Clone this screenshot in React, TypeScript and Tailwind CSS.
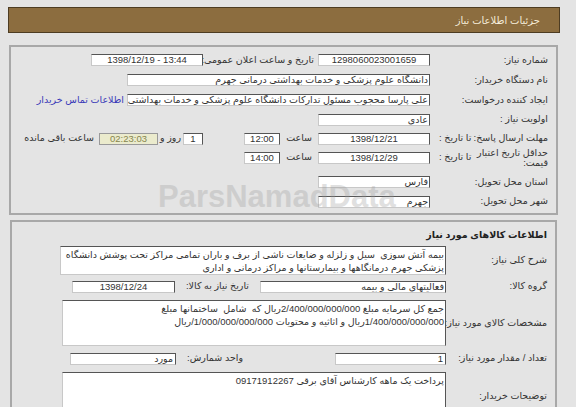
import React from 'react';

// Small field box, like an old read-only input
const Field: React.FC<{ className?: string; children?: React.ReactNode }> = ({ className = '', children }) => (
  <div
    className={`h-[12px] bg-white border border-[#555] border-b-[#c8c8c8] border-l-[#c8c8c8] flex items-center leading-none whitespace-nowrap overflow-hidden ${className}`}
  >
    {children}
  </div>
);

const Label: React.FC<{ className?: string; children?: React.ReactNode }> = ({ className = '', children }) => (
  <div className={`shrink-0 text-right whitespace-nowrap ${className}`}>{children}</div>
);

const Area: React.FC<{ className?: string; children?: React.ReactNode }> = ({ className = '', children }) => (
  <div
    className={`w-[384px] bg-white border border-[#555] border-b-[#c8c8c8] border-l-[#c8c8c8] pr-[1px] pt-[1px] leading-[13px] text-right ${className}`}
  >
    {children}
  </div>
);

export default function App() {
  return (
    <div
      dir="rtl"
      className="relative min-h-[407px] h-[407px] overflow-hidden bg-[#e4e4e4] text-[#333] text-[9.5px] font-['Liberation_Sans','DejaVu_Sans',sans-serif]"
    >
      {/* title bar */}
      <div className="pt-[7px] pr-[16px] pl-[8px]">
        <div className="h-[26px] bg-[#8c6d3f] border border-[#4d3c22] flex items-center pr-[19px] text-[#f4ecd9] text-[10px]">
          جزئیات اطلاعات نیاز
        </div>
      </div>

      {/* request details */}
      <div className="mt-[12px] mr-[18px] ml-[9px] border-2 border-[#a8a8a8] pt-[3px] pb-[2px] pr-[8px]">
        {/* row 1 */}
        <div className="flex items-center h-[20px]">
          <Label className="w-[118px]">شماره نیاز:</Label>
          <Field className="w-[112px] justify-center">
            <span dir="ltr">1298060023001659</span>
          </Field>
          <Label className="w-[115px] pr-[4px]">تاریخ و ساعت اعلان عمومی:</Label>
          <Field className="w-[112px] justify-center">
            <span dir="ltr">1398/12/19 - 13:44</span>
          </Field>
        </div>

        {/* row 2 */}
        <div className="flex items-center h-[20px]">
          <Label className="w-[118px]">نام دستگاه خریدار:</Label>
          <Field className="w-[303px] pr-[1px]">دانشگاه علوم پزشکی و خدمات بهداشتی درمانی جهرم</Field>
        </div>

        {/* row 3 */}
        <div className="flex items-center h-[20px]">
          <Label className="w-[118px]">ایجاد کننده درخواست:</Label>
          <Field className="w-[303px] pr-[1px]">
            علی پارسا محجوب مسئول تدارکات دانشگاه علوم پزشکی و خدمات بهداشتی درمانی جهرم
          </Field>
          <a className="pr-[3px] text-[#3a3ab8] whitespace-nowrap">اطلاعات تماس خریدار</a>
        </div>

        {/* row 4 */}
        <div className="flex items-center h-[19px]">
          <Label className="w-[118px]">اولویت نیاز :</Label>
          <Field className="w-[112px] pr-[1px]">عادی</Field>
        </div>

        {/* row 5 */}
        <div className="flex items-center h-[19px]">
          <div className="w-[118px] shrink-0 flex justify-between pl-[9px] whitespace-nowrap">
            <span>مهلت ارسال پاسخ:</span>
            <span>تا تاریخ :</span>
          </div>
          <Field className="w-[112px] justify-center">
            <span dir="ltr">1398/12/21</span>
          </Field>
          <Label className="w-[38px] pr-[6px]">ساعت</Label>
          <Field className="w-[36px] justify-center">
            <span dir="ltr">12:00</span>
          </Field>
          <div className="w-[41px] shrink-0" />
          <Field className="w-[20px] justify-center">1</Field>
          <Label className="w-[25px] pr-[2px]">روز و</Label>
          <div className="w-[59px] h-[12px] shrink-0 bg-[#ebebcd] border border-[#999] flex items-center justify-center text-[#86864e] leading-none">
            <span dir="ltr">02:23:03</span>
          </div>
          <Label className="pr-[5px]">ساعت باقی مانده</Label>
        </div>

        {/* row 6 */}
        <div className="flex items-center h-[19px]">
          <div className="w-[118px] shrink-0 flex items-center justify-between pl-[9px] whitespace-nowrap">
            <span className="leading-[10px] text-right">
              حداقل تاریخ اعتبار
              <br />
              قیمت:
            </span>
            <span>تا تاریخ :</span>
          </div>
          <Field className="w-[112px] justify-center">
            <span dir="ltr">1398/12/29</span>
          </Field>
          <Label className="w-[38px] pr-[6px]">ساعت</Label>
          <Field className="w-[36px] justify-center">
            <span dir="ltr">14:00</span>
          </Field>
        </div>

        {/* row 7 */}
        <div className="flex items-center h-[20px] mt-[5px]">
          <Label className="w-[118px]">استان محل تحویل:</Label>
          <Field className="w-[112px] pr-[1px]">فارس</Field>
        </div>

        {/* row 8 */}
        <div className="flex items-center h-[19px]">
          <Label className="w-[118px]">شهر محل تحویل:</Label>
          <Field className="w-[112px] pr-[1px]">جهرم</Field>
        </div>
      </div>

      {/* goods */}
      <div className="mt-[5px] mr-[19px] ml-[10px] border-2 border-[#a8a8a8] pt-[5px] pr-[8px] h-[200px]">
        <div className="h-[17px] flex items-center font-bold text-[#222]">اطلاعات کالاهای مورد نیاز</div>

        <div className="flex items-center mt-[2px]">
          <Label className="w-[101px]">شرح کلی نیاز:</Label>
          <Area className="h-[29px] w-[386px]">
            بیمه آتش سوزی&nbsp; سیل و زلزله و ضایعات ناشی از برف و باران تمامی مراکز تحت پوشش دانشگاه
            <br />
            پزشکی جهرم درمانگاهها و بیمارستانها و مراکز درمانی و اداری
          </Area>
        </div>

        <div className="flex items-center h-[21px] mt-[1px]">
          <Label className="w-[101px]">گروه کالا:</Label>
          <Field className="w-[186px] pr-[1px]">فعالیتهای مالی و بیمه</Field>
          <Label className="w-[85px] pr-[11px]">تاریخ نیاز به کالا:</Label>
          <Field className="w-[103px] justify-center">
            <span dir="ltr">1398/12/24</span>
          </Field>
        </div>

        <div className="flex items-center mt-[3px]">
          <Label className="w-[101px]">مشخصات کالای مورد نیاز:</Label>
          <Area className="h-[46px]">
            جمع کل سرمایه مبلغ 2/400/000/000/000ریال که&nbsp; شامل&nbsp; ساختمانها مبلغ
            <br />
            1/400/000/000/000ریال و اثاثیه و محتویات 1/000/000/000/000/ریال
          </Area>
        </div>

        <div className="flex items-center h-[21px] mt-[2px]">
          <Label className="w-[101px]">تعداد / مقدار مورد نیاز:</Label>
          <Field className="w-[111px] pr-[2px]">1</Field>
          <Label className="w-[159px] pr-[92px]">واحد شمارش:</Label>
          <Field className="w-[106px] pr-[2px]">مورد</Field>
        </div>

        <div className="flex items-center mt-[3px]">
          <Label className="w-[101px]">توضیحات خریدار:</Label>
          <Area className="h-[48px]">پرداخت یک ماهه کارشناس آقای برقی 09171912267</Area>
        </div>
      </div>

      {/* watermark */}
      <div className="pointer-events-none absolute left-[158px] top-[181px] text-[31px] font-bold text-[#9a9a9a] opacity-30 font-['Liberation_Sans',sans-serif] leading-none" dir="ltr">
        ParsNamadData
      </div>
    </div>
  );
}
